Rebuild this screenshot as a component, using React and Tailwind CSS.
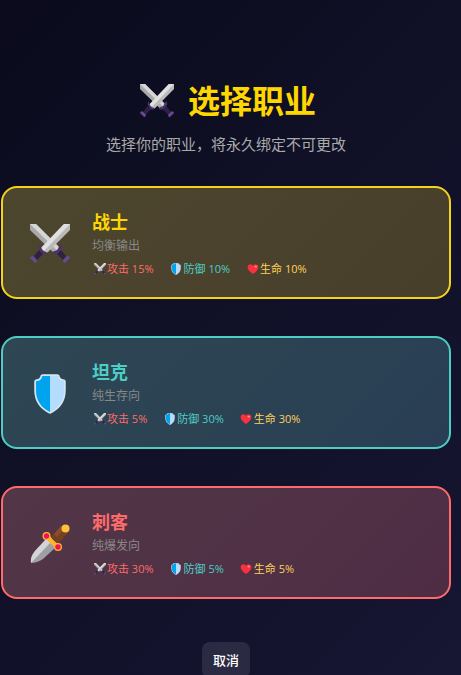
import React from 'react';

const SwordsIcon = ({ className }) => (
  <svg viewBox="0 0 40 40" className={className} aria-hidden="true">
    <path d="M0 0h6l24 24-6 5L0 6z" fill="#a9a9a9" />
    <path d="M0 0h6l24 24-3 2.500z" fill="#d6d6d6" />
    <path d="M27 30l4-4 5 6-3 4z" fill="#2f2046" />
    <path d="M22 29l2-2q4 0 5-5l2-2q2 3 0 6l-3 3q-3 2-6 0z" fill="#4a3369" />
    <path d="M33 36l4-4q3 0 3 2l-5 5q-2 0-2-3z" fill="#67498f" />
    <path d="M34 0h6v6L17 29q-4 0-6-5z" fill="#bababa" />
    <path d="M34 0h6L14 27l-3-3z" fill="#e0e0e0" />
    <path d="M13 30l-4-4-5 6 3 4z" fill="#2f2046" />
    <path d="M18 29l-2-1q-4-1-5-5l-1-3q-2 3 0 6l2 3q3 2 6 0z" fill="#4a3369" />
    <path d="M7 36l-4-4q-3 0-3 2l5 5q2 0 2-3z" fill="#67498f" />
  </svg>
);

const ShieldIcon = ({ className }) => (
  <svg viewBox="0 0 40 40" className={className} aria-hidden="true">
    <path
      d="M13 1h14q2 0 2 2 1 3 4 3 2 0 2 2v8q0 16-15 23Q5 32 5 16V8q0-2 2-2 3 0 4-3 0-2 2-2z"
      fill="#b3dcff"
      stroke="#d9e6f1"
      strokeWidth="1.5"
      strokeLinejoin="round"
    />
    <path d="M20 2h-7q-1 0-1 1-1 4-5 4-1 0-1 1v8q0 15 14 22z" fill="#00a3ee" />
  </svg>
);

const DaggerIcon = ({ className }) => (
  <svg viewBox="0 0 40 40" className={className} aria-hidden="true">
    <path d="M21 13l10-11 7 7-10 11z" fill="#74401f" />
    <path d="M24 10l7-8 3 3-7 8z" fill="#8a4c2b" />
    <circle cx="35.500" cy="4.500" r="4" fill="#ffc13b" />
    <path d="M17 14l9 9-13 12q-6 4-12 4-1-6 4-12z" fill="#9da0a4" />
    <path d="M17 14l4 4L1 39q-1-6 4-12z" fill="#d2d4d6" />
    <path d="M17 12q4 6 11 11" fill="none" stroke="#ffb52e" strokeWidth="4.500" strokeLinecap="round" />
    <circle cx="16.500" cy="12" r="4" fill="#ffb52e" />
    <circle cx="28" cy="23" r="4" fill="#ffb52e" />
    <circle cx="16.500" cy="12" r="2.700" fill="#f0105c" />
    <circle cx="28" cy="23" r="2.700" fill="#f0105c" />
  </svg>
);

const HeartIcon = ({ className }) => (
  <svg viewBox="0 0 40 40" className={className} aria-hidden="true">
    <path d="M20 37Q2 24 2 13 3 4 12 4q6 0 8 5 2-5 8-5 9 0 10 9 0 11-18 24z" fill="#f9313f" />
    <ellipse cx="29" cy="12" rx="4" ry="3" fill="#ff9398" />
  </svg>
);

const classes = [
  {
    id: 'warrior',
    name: '战士',
    desc: '均衡输出',
    Icon: SwordsIcon,
    attack: 15,
    defense: 10,
    health: 10,
    card: 'border-[#f5d21c] from-[#4d462e] to-[#483f2b]',
    title: 'text-[#ffd700]',
  },
  {
    id: 'tank',
    name: '坦克',
    desc: '纯生存向',
    Icon: ShieldIcon,
    attack: 5,
    defense: 30,
    health: 30,
    card: 'border-[#4ecdc4] from-[#2e4753] to-[#293e54]',
    title: 'text-[#4ecdc4]',
  },
  {
    id: 'assassin',
    name: '刺客',
    desc: '纯爆发向',
    Icon: DaggerIcon,
    attack: 30,
    defense: 5,
    health: 5,
    card: 'border-[#ff6b6b] from-[#523647] to-[#4e2d44]',
    title: 'text-[#ff6b6b]',
  },
];

const Stat = ({ Icon, label, value, color }) => (
  <span className={`flex items-center ${color}`}>
    <span className="flex w-[15px] justify-center">
      <Icon className="h-3 w-3" />
    </span>
    {label} {value}%
  </span>
);

const ClassCard = ({ item }) => {
  const { Icon } = item;
  return (
    <button
      type="button"
      className={`flex w-full items-center gap-4 rounded-2xl border-2 bg-linear-135 px-5 pt-[22px] pb-5 text-left ${item.card}`}
    >
      <span className="flex w-[53px] shrink-0 justify-center">
        <Icon className="h-10 w-10" />
      </span>
      <span className="flex flex-col">
        <span className={`text-lg leading-6 font-bold ${item.title}`}>{item.name}</span>
        <span className="mt-0.5 text-xs leading-5 text-[#888888]">{item.desc}</span>
        <span className="mt-[5px] flex gap-[15px] text-[11px] leading-4">
          <Stat Icon={SwordsIcon} label="攻击" value={item.attack} color="text-[#ff6b6b]" />
          <Stat Icon={ShieldIcon} label="防御" value={item.defense} color="text-[#4ecdc4]" />
          <Stat Icon={HeartIcon} label="生命" value={item.health} color="text-[#ffd15c]" />
        </span>
      </span>
    </button>
  );
};

const App = () => {
  return (
    <div className="h-screen overflow-hidden bg-linear-135 from-[#0b0b1d] to-[#171633] pt-[81px] pr-2.5 pl-px font-['Open_Sans','Noto_Sans_CJK_SC',sans-serif]">
      <header className="text-center">
        <h1 className="flex items-center justify-center gap-3.5 pl-1 text-[32px] leading-10 font-bold text-[#ffd700]">
          <SwordsIcon className="h-[34px] w-[34px]" />
          选择职业
        </h1>
        <p className="mt-[11px] text-[15px] leading-6 text-[#aaaaaa]">选择你的职业，将永久绑定不可更改</p>
      </header>

      <main className="mt-[30px] flex flex-col gap-[37px]">
        {classes.map((item) => (
          <ClassCard key={item.id} item={item} />
        ))}
      </main>

      <footer className="mt-[43px] flex justify-center">
        <button type="button" className="rounded-lg bg-[#2b2a43] px-[11px] py-2 text-[13px] leading-5 font-medium text-white">
          取消
        </button>
      </footer>
    </div>
  );
};

export default App;
